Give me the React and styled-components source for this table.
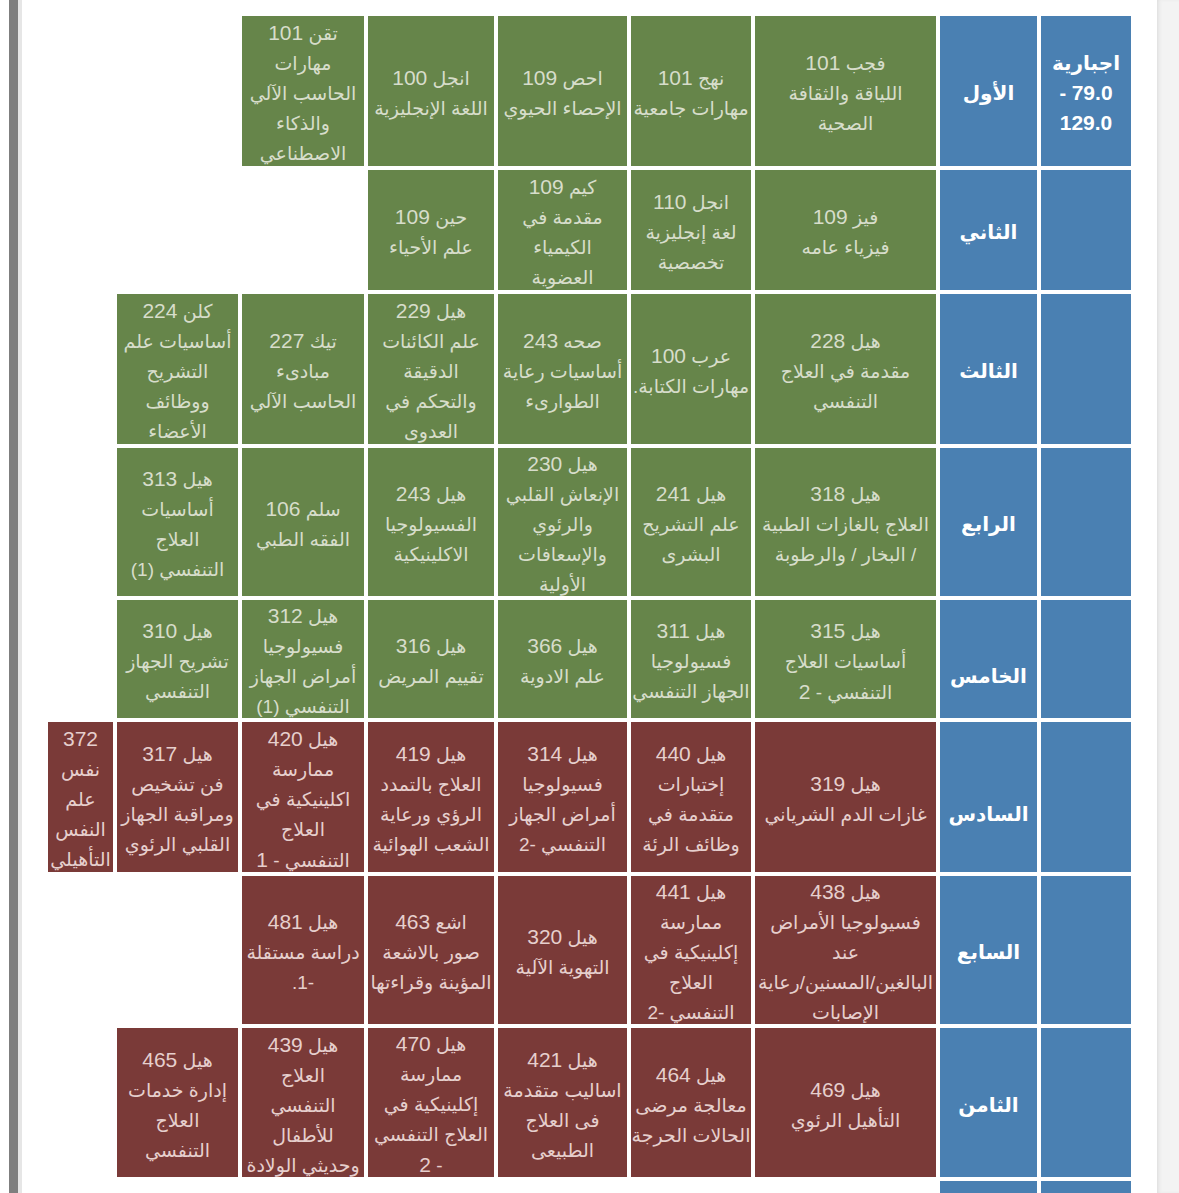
import styled, { createGlobalStyle } from "styled-components";

const GlobalStyle = createGlobalStyle`
  html, body {
    margin: 0;
    padding: 0;
    background: #ffffff;
    overflow: hidden;
  }
  body {
    font-family: "Liberation Sans", "DejaVu Sans", sans-serif;
  }
`;

const Page = styled.div`
  width: 1179px;
  height: 1193px;
  display: flex;
  overflow: hidden;
  background: #ffffff;
`;

const LeftRail = styled.div`
  width: 9px;
  margin-left: 9px;
  background: #7f7f7f;
  border-right: 4px solid #e6e6e6;
  flex-shrink: 0;
`;

const Content = styled.div`
  flex: 1;
  padding: 16px 0 0 26px;
  overflow: hidden;
`;

const RightGutter = styled.div`
  width: 22px;
  flex-shrink: 0;
  background: #f3f3f3;
  box-shadow: inset 3px 0 4px -2px #d8d8d8;
`;

const Schedule = styled.div`
  direction: rtl;
  width: 1083px;
  display: grid;
  grid-template-columns: 90px 97px 181px 120px 129px 126px 122px 121px 65px;
  grid-template-rows: 150px 120px 150px 148px 118px 150px 148px 149px 150px;
  gap: 4px;
`;

const toneBg = {
  green: "#66854a",
  red: "#7a3a38",
};

const toneInk = {
  green: "#d7ddcb",
  red: "#e6cfcd",
};

const HeadCell = styled.div`
  background: #4a80b2;
  color: #ffffff;
  font-weight: bold;
  font-size: 20px;
  line-height: 30px;
  display: flex;
  flex-direction: column;
  align-items: center;
  justify-content: center;
  padding-top: ${(p) => (p.$low ? "34px" : "4px")};
  text-align: center;
`;

const CourseCell = styled.div`
  background: ${(p) => toneBg[p.$tone]};
  color: ${(p) => toneInk[p.$tone]};
  font-size: 19px;
  line-height: 30px;
  display: flex;
  flex-direction: column;
  align-items: center;
  justify-content: center;
  padding-top: 5px;
  overflow: hidden;
  text-align: center;
`;

const EmptyCell = styled.div`
  background: transparent;
`;

const Line = styled.div`
  white-space: nowrap;
  flex-shrink: 0;
`;

const Num = styled.span`
  font-family: "Liberation Sans", sans-serif;
  font-size: 21px;
`;

const rows = [
  {
    label: "الأول",
    tone: "green",
    category: ["اجبارية", "79.0 -", "129.0"],
    cells: [
      ["فجب 101", "اللياقة والثقافة", "الصحية"],
      ["نهج 101", "مهارات جامعية"],
      ["احص 109", "الإحصاء الحيوي"],
      ["انجل 100", "اللغة الإنجليزية"],
      ["تقن 101", "مهارات", "الحاسب الآلي", "والذكاء", "الاصطناعي"],
      null,
      null,
    ],
  },
  {
    label: "الثاني",
    tone: "green",
    cells: [
      ["فيز 109", "فيزياء عامه"],
      ["انجل 110", "لغة إنجليزية", "تخصصية"],
      ["كيم 109", "مقدمة في", "الكيمياء", "العضوية"],
      ["حين 109", "علم الأحياء"],
      null,
      null,
      null,
    ],
  },
  {
    label: "الثالث",
    tone: "green",
    cells: [
      ["هيل 228", "مقدمة في العلاج", "التنفسي"],
      ["عرب 100", "مهارات الكتابة."],
      ["صحه 243", "أساسيات رعاية", "الطوارىء"],
      ["هيل 229", "علم الكائنات", "الدقيقة", "والتحكم في", "العدوى"],
      ["تيك 227", "مبادىء", "الحاسب الآلي"],
      ["كلن 224", "أساسيات علم", "التشريح", "ووظائف", "الأعضاء"],
      null,
    ],
  },
  {
    label: "الرابع",
    tone: "green",
    cells: [
      ["هيل 318", "العلاج بالغازات الطبية", "/ البخار / والرطوبة"],
      ["هيل 241", "علم التشريح", "البشرى"],
      ["هيل 230", "الإنعاش القلبي", "والرئوي", "والإسعافات", "الأولية"],
      ["هيل 243", "الفسيولوجيا", "الاكلينيكية"],
      ["سلم 106", "الفقه الطبي"],
      ["هيل 313", "أساسيات", "العلاج", "التنفسي (1)"],
      null,
    ],
  },
  {
    label: "الخامس",
    tone: "green",
    low: true,
    cells: [
      ["هيل 315", "أساسيات العلاج", "التنفسي - 2"],
      ["هيل 311", "فسيولوجيا", "الجهاز التنفسي"],
      ["هيل 366", "علم الادوية"],
      ["هيل 316", "تقييم المريض"],
      ["هيل 312", "فسيولوجيا", "أمراض الجهاز", "التنفسي (1)"],
      ["هيل 310", "تشريح الجهاز", "التنفسي"],
      null,
    ],
  },
  {
    label: "السادس",
    tone: "red",
    low: true,
    cells: [
      ["هيل 319", "غازات الدم الشرياني"],
      ["هيل 440", "إختبارات", "متقدمة في", "وظائف الرئة"],
      ["هيل 314", "فسيولوجيا", "أمراض الجهاز", "التنفسي -2"],
      ["هيل 419", "العلاج بالتمدد", "الرؤي ورعاية", "الشعب الهوائية"],
      ["هيل 420", "ممارسة", "اكلينيكية في", "العلاج", "التنفسي - 1"],
      ["هيل 317", "فن تشخيص", "ومراقبة الجهاز", "القلبي الرئوي"],
      ["372", "نفس", "علم", "النفس", "التأهيلي"],
    ],
  },
  {
    label: "السابع",
    tone: "red",
    cells: [
      ["هيل 438", "فسيولوجيا الأمراض", "عند", "البالغين/المسنين/رعاية", "الإصابات"],
      ["هيل 441", "ممارسة", "إكلينيكية في", "العلاج", "التنفسي -2"],
      ["هيل 320", "التهوية الآلية"],
      ["اشع 463", "صور بالاشعة", "المؤينة وقراءتها"],
      ["هيل 481", "دراسة مستقلة", "-1."],
      null,
      null,
    ],
  },
  {
    label: "الثامن",
    tone: "red",
    cells: [
      ["هيل 469", "التأهيل الرئوي"],
      ["هيل 464", "معالجة مرضى", "الحالات الحرجة"],
      ["هيل 421", "اساليب متقدمة", "فى العلاج", "الطبيعى"],
      ["هيل 470", "ممارسة", "إكلينيكية في", "العلاج التنفسي", "- 2"],
      ["هيل 439", "العلاج", "التنفسي", "للأطفال", "وحديثي الولادة"],
      ["هيل 465", "إدارة خدمات", "العلاج", "التنفسي"],
      null,
    ],
  },
];

// digits in the screenshot are set a touch larger than the Arabic words
function renderLine(text) {
  return text.split(" ").map((token, i, all) => {
    const tail = i < all.length - 1 ? " " : "";
    if (/^[\d.]+$/.test(token)) {
      return (
        <span key={i}>
          <Num>{token}</Num>
          {tail}
        </span>
      );
    }
    return <span key={i}>{token + tail}</span>;
  });
}

function Lines({ items }) {
  return items.map((text, i) => <Line key={i}>{renderLine(text)}</Line>);
}

function App() {
  return (
    <Page>
      <GlobalStyle />
      <LeftRail />
      <Content>
        <Schedule>
          {rows.map((row, r) => [
            <HeadCell key={`c${r}`}>
              {row.category ? <Lines items={row.category} /> : null}
            </HeadCell>,
            <HeadCell key={`l${r}`} $low={row.low}>
              {row.label}
            </HeadCell>,
            ...row.cells.map((cell, c) =>
              cell ? (
                <CourseCell key={`${r}-${c}`} $tone={row.tone}>
                  <Lines items={cell} />
                </CourseCell>
              ) : (
                <EmptyCell key={`${r}-${c}`} />
              )
            ),
          ])}
          <HeadCell />
          <HeadCell />
        </Schedule>
      </Content>
      <RightGutter />
    </Page>
  );
}

export default App;
